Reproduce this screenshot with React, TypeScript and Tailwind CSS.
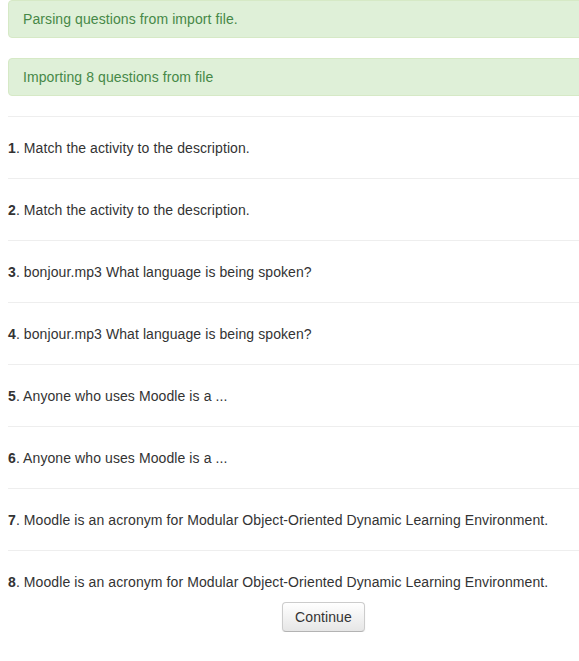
const questions = [
  "Match the activity to the description.",
  "Match the activity to the description.",
  "bonjour.mp3 What language is being spoken?",
  "bonjour.mp3 What language is being spoken?",
  "Anyone who uses Moodle is a ...",
  "Anyone who uses Moodle is a ...",
  "Moodle is an acronym for Modular Object-Oriented Dynamic Learning Environment.",
  "Moodle is an acronym for Modular Object-Oriented Dynamic Learning Environment.",
];

function Notice({ children }: { children: React.ReactNode }) {
  return (
    <div className="mb-5 rounded border border-[#d6e9c6] bg-[#dff0d8] py-2 pl-[14px] pr-[35px] text-[#468847]">
      {children}
    </div>
  );
}

export default function App() {
  return (
    <div className="w-full overflow-hidden bg-white">
      <div
        className="ml-2 w-[631px] text-[14px] leading-5 tracking-[0.09px] text-[#333333]"
        style={{ fontFamily: '"Liberation Sans", Arial, Helvetica, sans-serif' }}
      >
        <Notice>Parsing questions from import file.</Notice>
        <Notice>Importing 8 questions from file</Notice>

        <div>
          {questions.map((q, i) => (
            <div
              key={i}
              className={
                i === questions.length - 1
                  ? "border-t border-[#eeeeee] pt-[21px] pb-[10px]"
                  : "border-t border-[#eeeeee] pt-[21px] pb-5"
              }
            >
              <span className="font-bold">{i + 1}</span>. {q}
            </div>
          ))}
        </div>

        <div className="flex justify-center">
          <button
            type="button"
            className="rounded border border-[#cccccc] border-b-[#b3b3b3] bg-gradient-to-b from-white to-[#e6e6e6] px-3 py-1 text-[14px] leading-5 text-[#333333] shadow-[inset_0_1px_0_rgba(255,255,255,0.2),0_1px_2px_rgba(0,0,0,0.05)]"
          >
            Continue
          </button>
        </div>
      </div>
    </div>
  );
}
